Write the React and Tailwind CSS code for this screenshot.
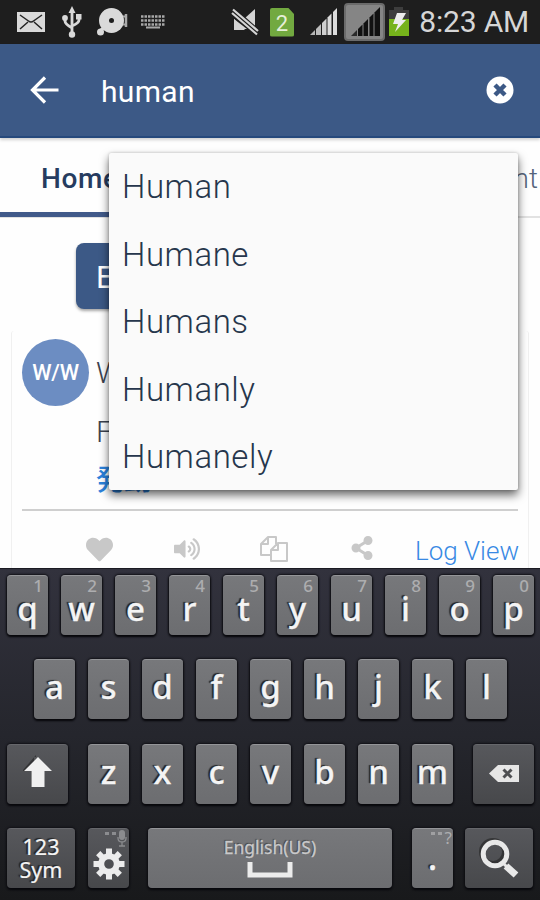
import React from 'react';
import { FaHeart, FaVolumeUp, FaShareAlt } from 'react-icons/fa';

const suggestions = ['Human', 'Humane', 'Humans', 'Humanly', 'Humanely'];

const StatusBar = () => (
  <div className="h-[44px] bg-[#1e1e1e] flex items-center pl-[16px] pr-[11px] text-[#d6d6d6]">
    {/* Mail */}
    <svg width="30" height="22" viewBox="0 0 30 22" className="shrink-0">
      <path d="M1 1h28v20H1z" fill="#d9d9d9" />
      <path d="M4 4l8.500 6q2.500 2 5 0L26 4M4 18l8-7M26 18l-8-7" fill="none" stroke="#222" strokeWidth="1.500" />
    </svg>
    {/* USB */}
    <svg width="20" height="32" viewBox="0 0 20 32" className="shrink-0 ml-[16px]">
      <g fill="none" stroke="#d9d9d9" strokeWidth="2.800">
        <path d="M10 5v22M3 11v4q0 3 7 7M17 10v4q0 3-7 6" />
      </g>
      <path d="M10 0l3.500 7h-7zM14 8h5.500v5.500H14z" fill="#d9d9d9" />
      <circle cx="3" cy="12" r="2.900" fill="#d9d9d9" />
      <circle cx="10" cy="28.500" r="3.200" fill="#d9d9d9" />
    </svg>
    {/* Alarm bell */}
    <svg width="32" height="30" viewBox="0 0 32 30" className="shrink-0 ml-[15px]">
      <circle cx="14.500" cy="13.500" r="12.500" fill="#dadada" />
      <circle cx="14.500" cy="13.500" r="2.500" fill="#1e1e1e" />
      <path d="M26 9.500h3M26 17.500h3" stroke="#aaa" strokeWidth="2" />
      <path d="M29 7v13" stroke="#aaa" strokeWidth="2.500" />
      <circle cx="3.500" cy="25" r="3.500" fill="#dadada" />
      <path d="M4 23l5-4" stroke="#dadada" strokeWidth="3" />
    </svg>
    {/* Keyboard */}
    <svg width="26" height="16" viewBox="0 0 26 16" className="shrink-0 ml-[11px]">
      <g stroke="#a8a8a8" strokeWidth="2.600" strokeDasharray="2.500 1">
        <path d="M1 2.500h24M1 6.500h24M1 10.500h24" />
      </g>
      <path d="M6 13.500h14" stroke="#a8a8a8" strokeWidth="2" />
    </svg>
    {/* Muted speaker */}
    <svg width="30" height="28" viewBox="0 0 30 28" className="shrink-0 ml-[65px]">
      <path d="M14 10L24 1v22z" fill="#d4d4d4" />
      <path d="M3 11v17h13l4-2z" fill="#1e1e1e" />
      <path d="M3 11v11h11z" fill="#d4d4d4" />
      <path d="M2 3l24 21" stroke="#1e1e1e" strokeWidth="7" />
      <path d="M2 1.500l25 21.500M1 5l25 21.500" stroke="#d4d4d4" strokeWidth="2.200" />
      <path d="M3 11v10h13z" fill="#d4d4d4" />
    </svg>
    {/* SIM card */}
    <div className="ml-[9px] w-[24px] h-[29px] bg-[#72a940] rounded-[2px] [clip-path:polygon(0_0,75%_0,100%_22%,100%_100%,0_100%)] flex items-center justify-center text-[22px] pt-[2px] text-[#e6efd9]">
      2
    </div>
    <svg width="30" height="28" viewBox="0 0 30 28" className="shrink-0 ml-[15px]">
      <g fill="#dcdcdc">
        <path d="M1 27l5-5v5z" fill="#b5b5b5" />
        <path d="M7 21l5-5v11H7z" fill="#bcbcbc" />
        <path d="M13 15l4.500-4.500V27H13z" fill="#cfcfcf" />
        <path d="M18.500 9.500L22.500 5.500V27h-4z" />
        <path d="M24 4l4-4v27h-4z" />
      </g>
    </svg>
    <div className="ml-[5px] w-[41px] h-[38px] bg-[#858585] border-2 border-[#6b6b6b] rounded-[4px] flex items-center justify-center">
      <svg width="32" height="30" viewBox="0 0 32 30">
        <g fill="#111">
          <path d="M2 29l6-6v6z" fill="#2a2a2a" />
          <path d="M9 22l4.500-4.500V29H9z" />
          <path d="M14.500 16.500l4.500-4.500v17h-4.500z" />
          <path d="M20.500 10.500l4-4V29h-4z" />
          <path d="M25.500 5.500L31 0v29h-5.500z" />
        </g>
      </svg>
    </div>
    {/* Battery */}
    <svg width="22" height="30" viewBox="0 0 22 30" className="shrink-0 ml-[3px]">
      <path d="M6 0h9v3h6v10H1V3h5z" fill="#3d3d3d" />
      <path d="M1 12h20v17H1z" fill="#76b31b" />
      <path d="M9 6h9l-4 7h4L7 25l3-8H5z" fill="#ededed" />
    </svg>
    <span className="ml-auto text-[30px] leading-none tracking-[-0.2px] whitespace-nowrap">8:23 AM</span>
  </div>
);

const SearchHeader = () => (
  <div className="relative h-[94px] bg-[#3c5986] border-b-2 border-[#26497c] flex items-center pl-[30px] pr-[26px] shadow-[0_2px_3px_rgba(0,0,0,0.18)]">
    <svg width="30" height="28" viewBox="0 0 30 28" fill="none" stroke="#fff" strokeWidth="3.200">
      <path d="M15 1.500L2.500 14 15 26.500M3 14h25.500" />
    </svg>
    <span className="ml-[41px] mt-[3px] text-[30px] leading-none tracking-[0.3px] text-white">human</span>
    <svg width="28" height="28" viewBox="0 0 28 28" className="ml-auto">
      <circle cx="14" cy="14" r="13.500" fill="#fff" />
      <path d="M9 9l10 10M19 9L9 19" stroke="#3c5986" strokeWidth="4.500" />
    </svg>
  </div>
);

const Tabs = () => (
  <div className="h-[80px] flex border-b-2 border-[#e2e2e2] text-[28px] text-[#263c60]">
    <div className="w-[180px] h-[79px] shrink-0 border-b-[5px] border-[#415a8a] pl-[41px] pt-[20px] font-medium leading-[42px] tracking-[0.6px]">
      Home
    </div>
    <div className="ml-auto pr-[2px] pt-[20px] font-light leading-[42px] text-[#56647c]">nt</div>
  </div>
);

const WordCard = () => (
  <div className="ml-[11px] mr-[11px] mt-[22px] h-[300px] border-x border-[#f0f0f0] px-[10px] pt-[8px] rounded-[3px]">
    <div className="h-[170px] flex">
      <div className="w-[67px] h-[67px] shrink-0 rounded-full bg-[#6c8dc2] text-white text-[22px] font-medium tracking-[-0.3px] flex items-center justify-center">
        W/W
      </div>
      <div className="ml-[7px] text-[30px] font-light leading-[59px] text-[#3c4350] pt-[4px]">
        <p>W</p>
        <p>F</p>
        <p className="text-[28px] leading-[34px] font-medium text-[#2b82dc] font-['Noto_Sans_CJK_JP',sans-serif]">発動</p>
      </div>
    </div>
    <div className="border-t-2 border-[#cfcfcf] h-[80px] flex items-start pt-[24px] text-[#c8c8c8]">
      <FaHeart size={27} className="ml-[64px] mt-px" />
      <FaVolumeUp size={26} className="ml-[61px] mt-px" />
      <svg width="28" height="28" viewBox="0 0 28 28" className="ml-[60px]" fill="none" stroke="#c8c8c8" strokeWidth="2" strokeLinejoin="round">
        <path d="M11 20H1V9l7-7h8v7M8 2v7H1" />
        <path d="M18 8h9v18H11V15zM18 8v7h-7" />
      </svg>
      <FaShareAlt size={24} className="ml-[62px] mt-px" />
      <span className="ml-auto mr-[-1px] mt-[-1px] text-[26px] font-light leading-[35px] text-[#3889e4]">Log View</span>
    </div>
  </div>
);

const Suggestions = () => (
  <div className="absolute left-[109px] top-[153px] w-[409px] h-[337px] bg-[#fafafa] rounded-[2px] shadow-[0_5px_10px_rgba(0,0,0,0.6),0_0_3px_rgba(0,0,0,0.2)]">
    {suggestions.map((word) => (
      <div key={word} className="h-[67.500px] pl-[13px] text-[33px] font-light leading-[67.500px] tracking-[0.55px] text-[#26364c]">
        {word}
      </div>
    ))}
  </div>
);

const Key = ({ children, hint, width = 'w-[41px]', dark = false }) => (
  <div
    className={`relative h-[60px] shrink-0 rounded-[4px] flex items-center justify-center text-[33px] font-medium text-[#f4f4f4] border-t shadow-[0_2px_2px_#08080c,0_0_2px_1px_#111116] [text-shadow:-2px_-1px_1px_#252525] ${width} ${
      dark
        ? 'bg-gradient-to-b from-[#57585c] to-[#47484b] border-[#66676b]'
        : 'bg-gradient-to-b from-[#77787b] to-[#6c6d70] border-[#949598]'
    }`}
  >
    {hint && (
      <span className="absolute right-[5px] top-[1px] text-[17px] leading-[17px] text-[#adadaf] [text-shadow:none]">
        {hint}
      </span>
    )}
    {children}
  </div>
);

const Letter = ({ char, hint }) => (
  <Key hint={hint}>
    <span className={`leading-none [-webkit-text-stroke:0.3px_#f4f4f4] ${hint ? 'pt-[5px]' : 'pb-[6px]'}`}>{char}</span>
  </Key>
);

const Keyboard = () => (
  <div className="absolute inset-x-0 top-[568px] h-[332px] overflow-hidden border-t border-[#1b1b22] bg-gradient-to-b from-[#32323d] via-[#25262d] to-[#18191b] px-[7px] pt-[6px] flex flex-col gap-[24.400px] font-['Noto_Sans',sans-serif]">
    <div className="flex gap-[13px]">
      {'qwertyuiop'.split('').map((char, i) => (
        <Letter key={char} char={char} hint={String((i + 1) % 10)} />
      ))}
    </div>
    <div className="flex gap-[13px] pl-[27px]">
      {'asdfghjkl'.split('').map((char) => (
        <Letter key={char} char={char} />
      ))}
    </div>
    <div className="flex gap-[13px]">
      <Key width="w-[61px] mr-[7px]" dark>
        <svg width="30" height="34" viewBox="0 0 30 34" className="mb-[4px]">
          <path d="M0 15L13 0v2H11v30H8V16H0z" fill="#222" opacity=".6" />
          <path d="M15 2l14 14h-7.500v16h-13V16H1z" fill="#f0f0f0" />
        </svg>
      </Key>
      {'zxcvbnm'.split('').map((char) => (
        <Letter key={char} char={char} />
      ))}
      <Key width="w-[61px] ml-[7px]" dark>
        <svg width="30" height="17" viewBox="0 0 30 17" className="mb-[2px]">
          <path d="M0 8.500L9 0h21v17H9z" fill="#e6e6e6" />
          <path d="M14.500 4.500l8 8M22.500 4.500l-8 8" stroke="#4e4f52" strokeWidth="3" />
        </svg>
      </Key>
    </div>
    <div className="flex">
      <Key width="w-[68px]" dark>
        <span className="text-[21.500px] leading-[23px] text-center font-normal pb-[2px] [-webkit-text-stroke:0.2px_#f4f4f4]">
          123
          <br />
          Sym
        </span>
      </Key>
      <Key width="w-[41px] ml-[13px]" dark>
        {/* Microphone hint */}
        <svg width="22" height="17" viewBox="0 0 22 17" className="absolute right-[2px] top-[1px]">
          <path d="M0 2h4v3H0zM7 2h4v3H7z" fill="#8b8c8f" />
          <rect x="14" y="0" width="6" height="10" rx="3" fill="#8b8c8f" />
          <path d="M13 7v1q0 4 4 4t4-4V7M17 12v4M14 16h6" fill="none" stroke="#8b8c8f" strokeWidth="1.300" />
        </svg>
        <svg width="32" height="32" viewBox="-16 -16 32 32" className="mt-[11px]">
          <g stroke="#ececec" strokeWidth="6">
            <path d="M0-15.500V-8M0 8v7.500M-15.500 0H-8M8 0h7.500" />
            <path d="M-10.800-10.800L-6-6M6 6l4.800 4.800M10.800-10.800L6-6M-6 6l-4.800 4.800" />
          </g>
          <circle r="7.800" fill="none" stroke="#ececec" strokeWidth="6" />
        </svg>
      </Key>
      <Key width="w-[244px] ml-[19px]">
        <div className="flex flex-col items-center pb-[2px]">
          <span className="text-[17.500px] leading-[20px] font-normal text-[#c9c9ca] [text-shadow:-1px_-1px_1px_#444] [-webkit-text-stroke:0.3px_#c9c9ca]">
            English(US)
          </span>
          <svg width="46" height="18" viewBox="0 0 46 18" className="mt-[4px]">
            <path d="M3 1v13h40V1" fill="none" stroke="#ececec" strokeWidth="5" />
          </svg>
        </div>
      </Key>
      <Key width="w-[41px] ml-[20px]">
        <div className="absolute right-[1px] top-0 flex items-start gap-[3px] text-[17px] leading-[17px] font-normal text-[#adadaf] [text-shadow:none]">
          <i className="w-[4px] h-[3px] mt-[3px] bg-[#a0a0a2]" />
          <i className="w-[4px] h-[3px] mt-[3px] bg-[#a0a0a2]" />
          <span>?</span>
        </div>
        <span className="leading-none pb-[2px] [-webkit-text-stroke:0.5px_#f4f4f4]">.</span>
      </Key>
      <Key width="w-[68px] ml-[12px]" dark>
        <svg width="42" height="42" viewBox="0 0 42 42" fill="none">
          <circle cx="15" cy="14" r="11.500" stroke="#222" strokeWidth="5" opacity=".6" />
          <path d="M28 28l10 9" stroke="#e9e9e9" strokeWidth="7" />
          <circle cx="17" cy="16" r="11.800" stroke="#e9e9e9" strokeWidth="5" />
          <path d="M24 24l5 5" stroke="#e9e9e9" strokeWidth="3" />
        </svg>
      </Key>
    </div>
  </div>
);

const App = () => {
  return (
    <div className="relative w-[540px] h-[900px] overflow-hidden bg-[#fefefe] font-['Roboto',sans-serif]">
      <StatusBar />
      <SearchHeader />
      <Tabs />
      <div className="ml-[76px] mt-[25px] w-[150px] h-[66px] rounded-[8px] bg-[#3c5986] shadow-[0_2px_3px_rgba(0,0,0,0.35)] pl-[20px] text-[31px] leading-[70px] text-white">
        E
      </div>
      <WordCard />
      <Suggestions />
      <Keyboard />
    </div>
  );
};

export default App;
